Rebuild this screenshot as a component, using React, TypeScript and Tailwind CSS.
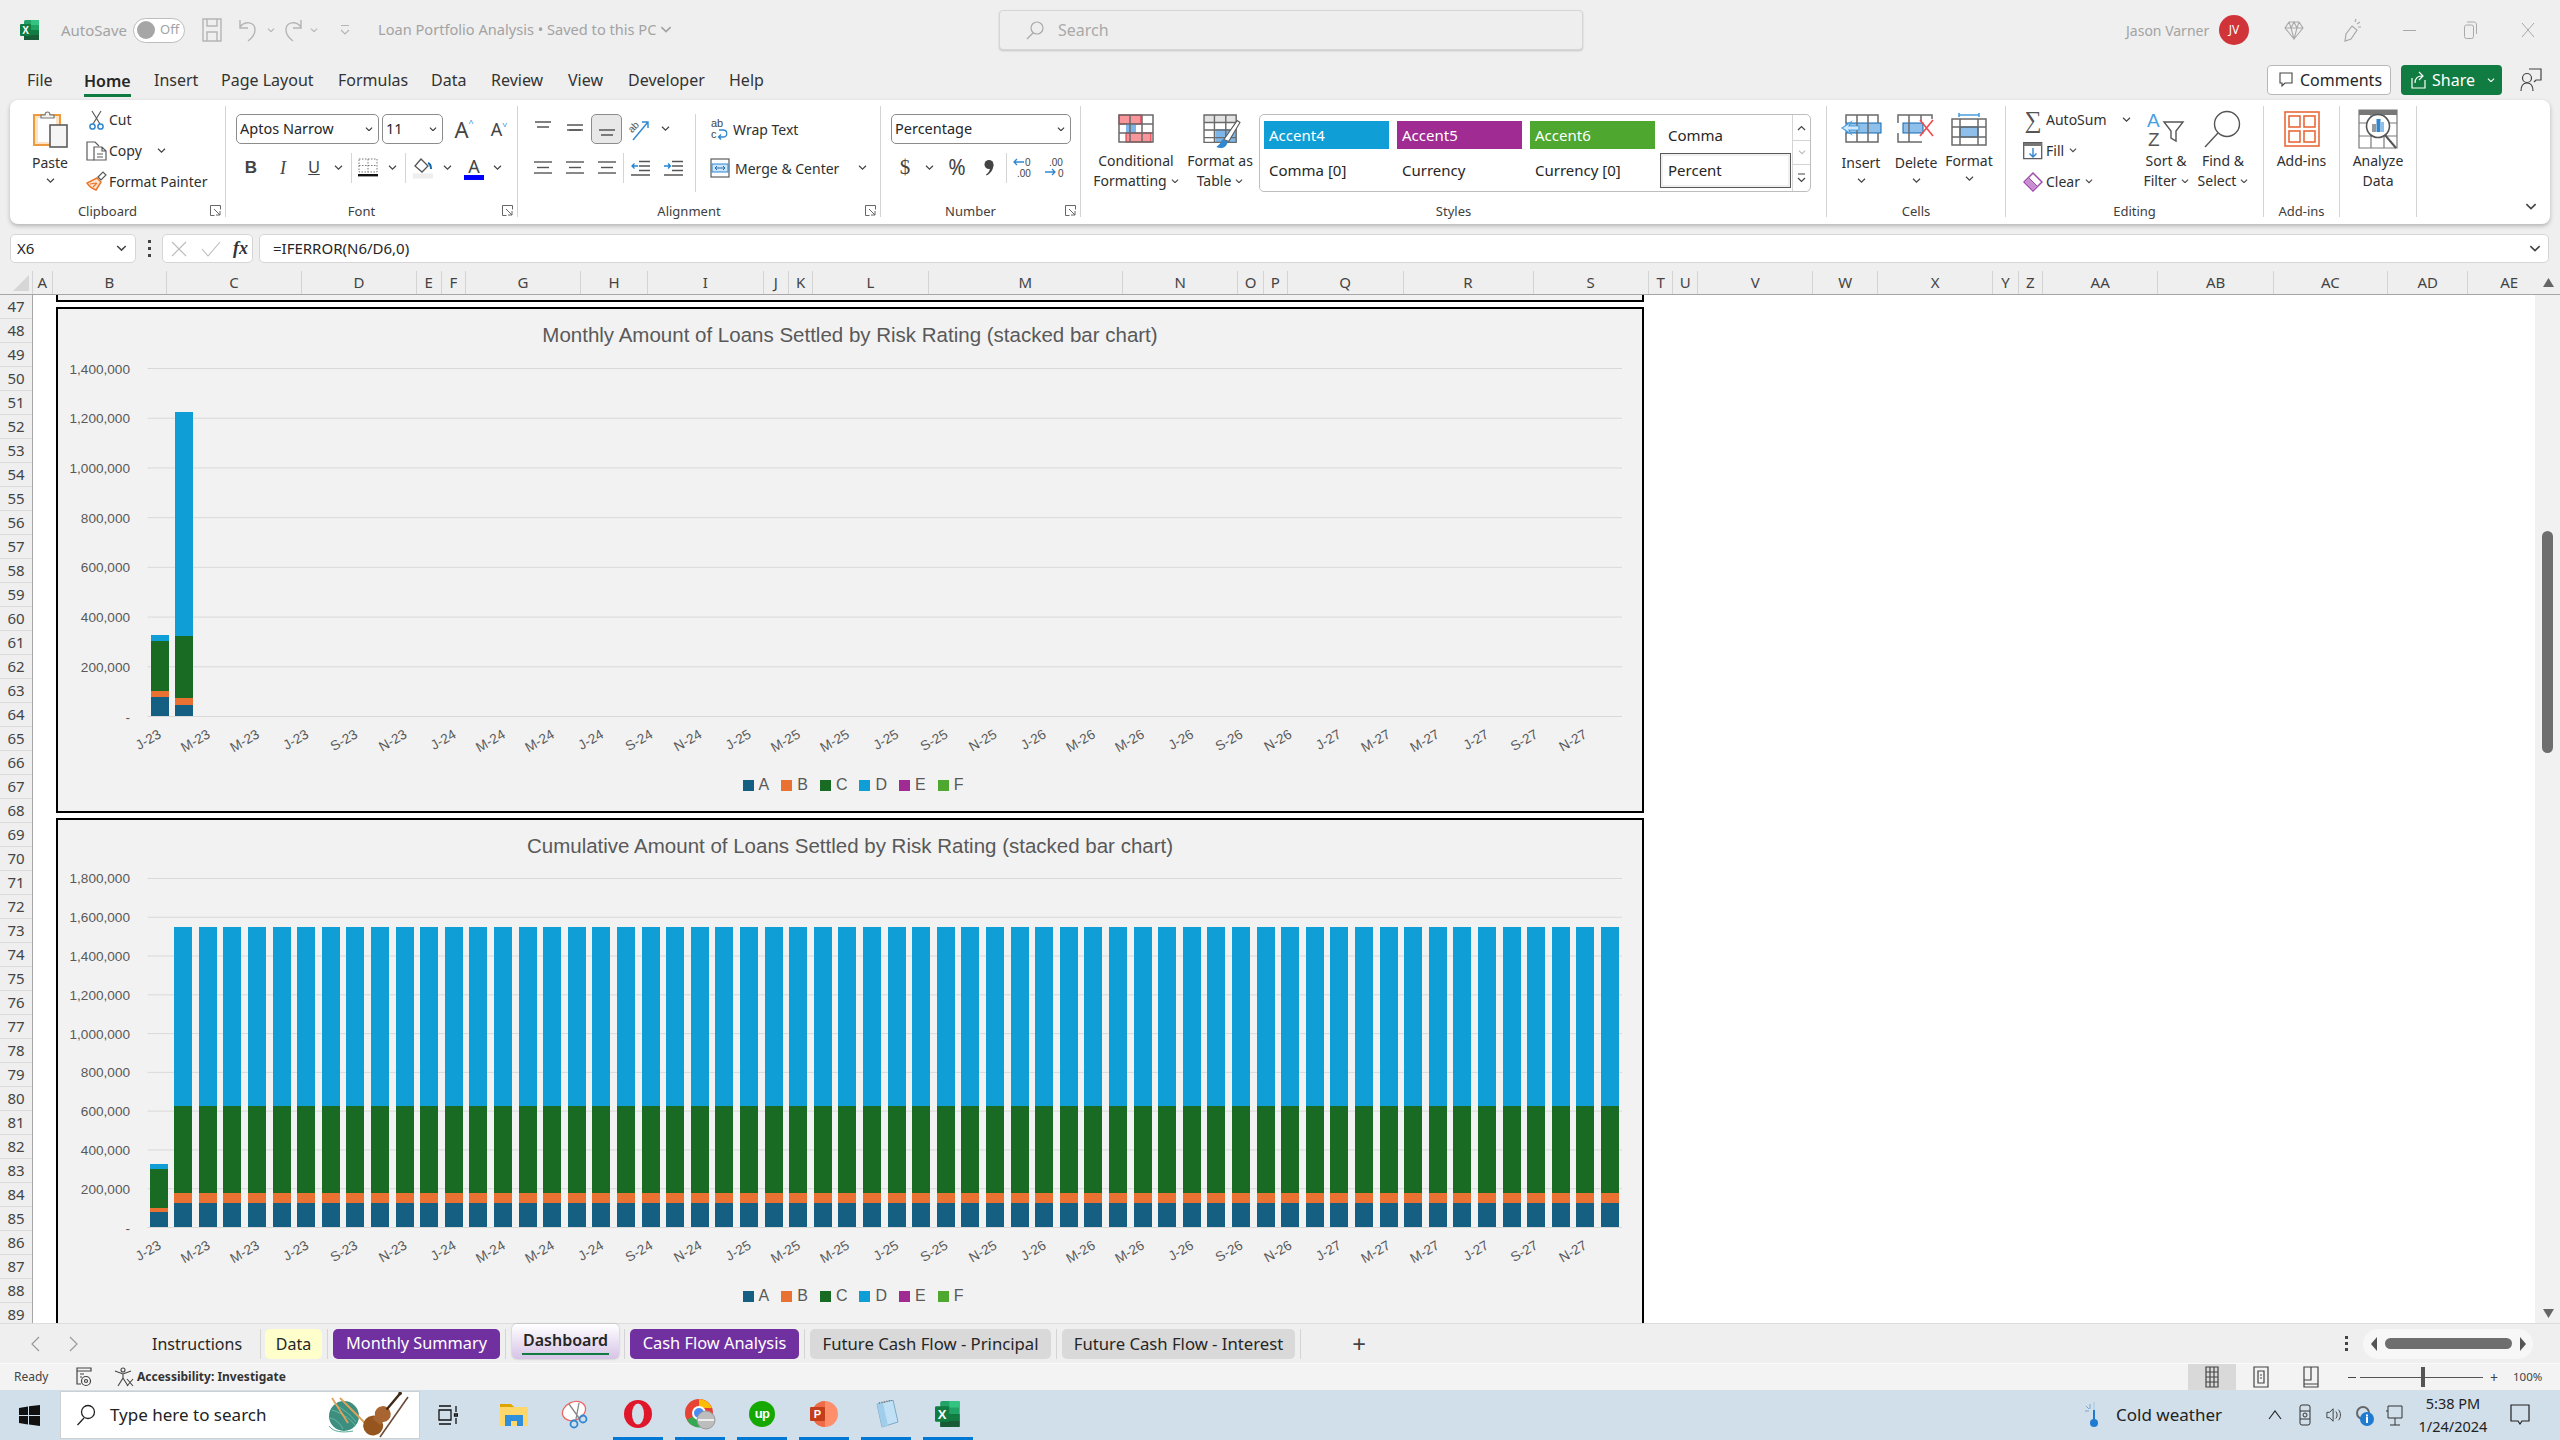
import React from "react";

const B = "#4a9fe0";
const BF = "#8fc0ec";
const BD = "#1069b0";

function Chev({ c = "#444", s = 9 }: { c?: string; s?: number }) {
  return (
    <svg width={s} height={s * 0.6} viewBox="0 0 9 5.4" fill="none" stroke={c} strokeWidth="1.2">
      <path d="M1 .8 4.5 4.2 8 .8" />
    </svg>
  );
}

function C({ className = "", children }: { className?: string; children?: React.ReactNode }) {
  return <div className={"flex items-center justify-center shrink-0 " + className}>{children}</div>;
}

function Launcher() {
  return (
    <svg width="11" height="11" viewBox="0 0 11 11" fill="none" stroke="#666" strokeWidth="1">
      <path d="M10.5 4.5V.5H.5v10h4M4 4l6 6M10 6v4H6" />
    </svg>
  );
}

function Group({ className = "", label, launcher, children }: { className?: string; label?: string; launcher?: boolean; children?: React.ReactNode }) {
  return (
    <div className={"flex flex-col h-[111px] mt-[6px] border-r border-[#d4d4d4] shrink-0 " + className}>
      <div className="h-[97px] flex">{children}</div>
      <div className="h-[14px] flex items-center">
        <div className="flex-1 text-center text-[13px] leading-[14px] text-[#404040] pt-[2px]">{label}</div>
        {launcher && <C className="w-[20px]"><Launcher /></C>}
      </div>
    </div>
  );
}

function Big({ className = "", icon, l1, l2, chev, low }: { className?: string; icon: React.ReactNode; l1: string; l2?: string; chev?: boolean; low?: boolean }) {
  return (
    <div className={"flex flex-col items-center shrink-0 " + className}>
      <div className="h-[45px] flex items-center justify-center">{icon}</div>
      <div className={"text-[14px] leading-[20px] whitespace-nowrap text-[#303030] " + (low ? "mt-[2px]" : "")}>{l1}</div>
      {l2 && (
        <div className="text-[14px] leading-[20px] whitespace-nowrap text-[#303030] flex items-center gap-[4px]">
          {l2}
          {chev && <Chev s={8} />}
        </div>
      )}
      {!l2 && chev && <div className="h-[16px] flex items-center"><Chev /></div>}
    </div>
  );
}

const ExcelLogo = ({ s = 20 }: { s?: number }) => (
  <svg width={s} height={s} viewBox="0 0 20 20">
    <rect x="4" y="0" width="15" height="20" rx="1.5" fill="#21a366" />
    <rect x="11" y="0" width="8" height="5" fill="#33c481" />
    <rect x="4" y="10" width="15" height="5" fill="#107c41" />
    <rect x="4" y="15" width="15" height="5" fill="#185c37" />
    <rect x="0" y="4" width="11" height="12" rx="1" fill="#107c41" />
    <text x="5.5" y="13.5" textAnchor="middle" fontSize="10" fontWeight="700" fill="#fff" fontFamily="Liberation Sans">X</text>
  </svg>
);

const SaveIc = () => (
  <svg width="20" height="24" viewBox="0 0 20 24" fill="none" stroke="#b5b5b5" strokeWidth="1.4">
    <path d="M1 1h18v22H1zM5 1v7h10V1M5 23v-9h10v9" />
  </svg>
);
const UndoIc = ({ flip }: { flip?: boolean }) => (
  <svg width="19" height="24" viewBox="0 0 19 24" fill="none" stroke="#b5b5b5" strokeWidth="1.4" className={flip ? "-scale-x-100" : ""}>
    <path d="M2 2v8h8M2 9c5-7 15-5 15 3 0 4-3 8-7 11" />
  </svg>
);

const PasteIc = () => (
  <svg width="35" height="38" viewBox="0 0 35 38">
    <rect x="1" y="5" width="26" height="30" fill="#fde3c3" stroke="#ec9a3b" strokeWidth="2" />
    <rect x="5" y="8" width="18" height="24" fill="#fff" />
    <path d="M8 8V5h4c0-4 5-4 5 0h4v3z" fill="#f2f2f2" stroke="#777" strokeWidth="1.2" />
    <rect x="17" y="15" width="17" height="22" fill="#f5f5f5" stroke="#5c5c5c" strokeWidth="1.6" />
  </svg>
);
const CutIc = () => (
  <svg width="15" height="20" viewBox="0 0 15 20" fill="none">
    <path d="M3 1l8 13M12 1L4 14" stroke="#5c5c5c" strokeWidth="1.2" />
    <circle cx="3.5" cy="16.5" r="2.6" stroke="#2f86d1" strokeWidth="1.5" />
    <circle cx="11.5" cy="16.5" r="2.6" stroke="#2f86d1" strokeWidth="1.5" />
  </svg>
);
const CopyIc = () => (
  <svg width="21" height="20" viewBox="0 0 21 20" fill="none" stroke="#5c5c5c" strokeWidth="1.2">
    <path d="M8 19H1V1h8l4 4" />
    <path d="M8 6h8l4 4v9H8zM16 6v4h4M11 13h6M11 16h6" fill="#fff" />
  </svg>
);
const PainterIc = () => (
  <svg width="21" height="21" viewBox="0 0 21 21" fill="none">
    <path d="M11 7l4 4-5 8c-3-1-7-4-9-7z" fill="#fbe4cf" stroke="#e8772e" strokeWidth="1.5" />
    <path d="M4 13l6-1M7 16l4-4" stroke="#e8772e" strokeWidth="1.2" />
    <path d="M12 6l5-5 3 3-5 5z" fill="#fff" stroke="#5c5c5c" strokeWidth="1.2" />
  </svg>
);
const BorderIc = () => (
  <svg width="20" height="20" viewBox="0 0 20 20" fill="none">
    <path d="M1 1h18v13H1zM10 1v13M1 7.5h18" stroke="#777" strokeWidth="1" strokeDasharray="1.5 1.5" />
    <rect x="0" y="16" width="20" height="2.4" fill="#111" />
  </svg>
);
const FillIc = () => (
  <svg width="20" height="21" viewBox="0 0 20 21" fill="none">
    <path d="M8 1l7 7-6 6-7-6z" stroke="#555" strokeWidth="1.3" fill="#fff" />
    <path d="M15 5c3 1 3 5 3 6" stroke={BD} strokeWidth="2" />
    <rect x="0" y="15.5" width="20" height="5" fill="#eeeeee" />
  </svg>
);
const Lines = ({ w }: { w: number[] }) => (
  <svg width="18" height="16" viewBox="0 0 18 16" fill="none" stroke="#555" strokeWidth="1.4">
    {w.map((v, i) => (
      <path key={i} d={`M${(18 - v) / 2} ${2 + i * 5.5}h${v}`} />
    ))}
  </svg>
);
const AlignV = ({ y }: { y: number }) => (
  <svg width="18" height="20" viewBox="0 0 18 20" fill="none" stroke="#555" strokeWidth="1.4">
    <path d={`M1 ${y}h16M3 ${y + 5}h12`} />
    {y === 6 ? <path d="M1 11h16" /> : null}
  </svg>
);
const IndentIc = ({ right }: { right?: boolean }) => (
  <svg width="19" height="16" viewBox="0 0 19 16" fill="none">
    <path d="M8 1.5h11M8 6h11M8 10.5h11M0 15h19" stroke="#555" strokeWidth="1.3" />
    <path d={right ? "M0 6h6M4 3.5 6.5 6 4 8.5" : "M7 6H1M3.5 3.5 1 6l2.5 2.5"} stroke="#1f85d6" strokeWidth="1.3" />
  </svg>
);
const OrientIc = () => (
  <svg width="24" height="26" viewBox="0 0 24 26" fill="none" className="overflow-visible">
    <text x="1" y="14" fontSize="10" fill="#555" transform="rotate(-45 7 11)" fontFamily="Liberation Sans">ab</text>
    <path d="M6 24 21 6M15 6h6v6" stroke="#2f86d1" strokeWidth="1.4" />
  </svg>
);
const WrapIc = () => (
  <svg width="20" height="28" viewBox="0 0 20 28" fill="none">
    <text x="1" y="12" fontSize="11" fill="#444" fontFamily="Liberation Sans">ab</text>
    <text x="1" y="23" fontSize="11" fill="#444" fontFamily="Liberation Sans">c</text>
    <path d="M9 22h4c5 0 5-7 0-7H9M11 19.5 8.5 22l2.5 2.5" stroke="#2f86d1" strokeWidth="1.3" />
  </svg>
);
const MergeIc = () => (
  <svg width="20" height="20" viewBox="0 0 20 20" fill="none">
    <rect x="1" y="1" width="18" height="18" fill="#fff" stroke="#5c5c5c" strokeWidth="1.2" />
    <rect x="2" y="6" width="16" height="8" fill="#cfe4f7" stroke="#2f86d1" />
    <path d="M5 10h10M7 8l-2 2 2 2M13 8l2 2-2 2" stroke="#1f6fb8" strokeWidth="1" />
  </svg>
);
const Dec = ({ inc }: { inc?: boolean }) => (
  <svg width="24" height="26" viewBox="0 0 24 26" fill="none">
    <text x={inc ? 5 : 13} y="11" fontSize="10" fill="#444" fontFamily="Liberation Sans">{inc ? ".00" : "0"}</text>
    <text x={inc ? 14 : 5} y="22" fontSize="10" fill="#444" fontFamily="Liberation Sans">{inc ? "0" : ".00"}</text>
    <path d={inc ? "M1 17h10M8 14l3 3-3 3" : "M12 7H2M5 4 2 7l3 3"} stroke="#2f86d1" strokeWidth="1.3" />
  </svg>
);
const CommaIc = () => (
  <svg width="10" height="16" viewBox="0 0 10 16" fill="#444">
    <circle cx="5" cy="4.5" r="4.5" />
    <path d="M9.5 4.5c0 5-3 9-7 11l-.5-1c3-2 4-4.5 4-7z" />
  </svg>
);
const GridBase = ({ d }: { d: string }) => <path d={d} fill="none" stroke="#6a6a6a" strokeWidth="1.5" />;
const CondIc = () => (
  <svg width="36" height="29" viewBox="0 0 36 29">
    <rect x="1" y="1" width="34" height="27" fill="#fff" />
    <rect x="1" y="1" width="22" height="9" fill="#f8969c" stroke="#d23" strokeWidth="1" />
    <rect x="8" y="10" width="10" height="9" fill="#7eb6ea" />
    <rect x="8" y="19" width="25" height="9" fill="#f8969c" stroke="#d23" strokeWidth="1" />
    <GridBase d="M1 1h34v27H1zM12 1v27M24 1v27M1 10h34M1 19h34" />
  </svg>
);
const TableFmtIc = () => (
  <svg width="38" height="35" viewBox="0 0 40 37">
    <rect x="1" y="1" width="34" height="8" fill="#e3e3e3" />
    <rect x="13" y="16" width="22" height="14" fill="#7eb6ea" />
    <GridBase d="M1 1h34v29H1zM12 1v29M24 1v29M1 9h34M1 17h34M1 25h34" />
    <path d="M22 27 36 7l3 2-12 20z" fill="#fff" stroke="#5c5c5c" strokeWidth="1.2" />
    <path d="M20 27c-1 4-3 5-6 8 5 2 11 1 12-6z" fill="#2f86d1" />
  </svg>
);
const InsertIc = () => (
  <svg width="41" height="29" viewBox="0 0 41 29">
    <rect x="5" y="1" width="34" height="27" fill="#fff" />
    <rect x="5" y="9" width="35" height="10" fill={BF} stroke={BD} />
    <GridBase d="M5 9V1h32v8M5 19v9h32v-9M16 1v27M27 1v27" />
    <path d="M18 12H8l2-4-9 6 9 6-2-4h10z" fill="#d5e8f9" stroke={B} strokeWidth="1.2" />
  </svg>
);
const DeleteIc = () => (
  <svg width="38" height="29" viewBox="0 0 38 29">
    <rect x="1" y="1" width="34" height="27" fill="#fff" />
    <rect x="6" y="9" width="20" height="10" fill={BF} stroke={BD} />
    <GridBase d="M1 9V1h34v4M1 19v9h24M12 1v27M24 1v6" />
    <path d="M23 6 36 22M36 6 23 22" stroke="#f0484e" strokeWidth="1.6" />
  </svg>
);
const FormatIc = () => (
  <svg width="36" height="34" viewBox="0 0 36 34">
    <path d="M8 1v4M28 1v4M8 3h20" stroke={B} strokeWidth="1.6" />
    <rect x="1" y="7" width="34" height="26" fill="#fff" />
    <rect x="9" y="15" width="18" height="10" fill={BF} stroke={BD} />
    <GridBase d="M1 7h34v26H1zM9 7v26M27 7v26M1 15h34M1 25h34" />
  </svg>
);
const FillDownIc = () => (
  <svg width="20" height="18" viewBox="0 0 20 18" fill="none">
    <path d="M.7 .7h18v16H.7z" stroke="#5c5c5c" strokeWidth="1.3" fill="#fff" />
    <rect x="1" y="1" width="18" height="3" fill="#777" />
    <path d="M10 6v9M6.5 11.5 10 15l3.5-3.5" stroke="#2f86d1" strokeWidth="1.4" />
  </svg>
);
const ClearIc = () => (
  <svg width="20" height="20" viewBox="0 0 20 20">
    <path d="M10 1l9 9-9 9-9-9z" fill="#fff" stroke="#a349b0" strokeWidth="1.5" />
    <path d="M5.5 5.5l9 9-4.5 4.5-9-9z" fill="#c78ed0" stroke="#a349b0" strokeWidth="1" />
  </svg>
);
const SortIc = () => (
  <svg width="38" height="44" viewBox="0 0 38 44" fill="none">
    <text x="0" y="20" fontSize="19" fill={B} fontFamily="Liberation Sans">A</text>
    <text x="1" y="39" fontSize="19" fill="#555" fontFamily="Liberation Sans">Z</text>
    <path d="M17 15h19l-7 9v10l-5-3v-7z" stroke="#555" strokeWidth="1.4" />
  </svg>
);
const FindIc = () => (
  <svg width="38" height="38" viewBox="0 0 38 38" fill="none" stroke="#555" strokeWidth="1.4">
    <circle cx="23" cy="14" r="12.5" />
    <path d="M14 23 1 37" />
  </svg>
);
const AddinsIc = () => (
  <svg width="36" height="36" viewBox="0 0 36 36" fill="none" stroke="#e8693a" strokeWidth="1.6">
    <rect x="1" y="1" width="34" height="34" />
    <rect x="5" y="5" width="11" height="11" />
    <rect x="20" y="5" width="11" height="11" />
    <rect x="5" y="20" width="11" height="11" />
    <rect x="20" y="20" width="11" height="11" />
  </svg>
);
const AnalyzeIc = () => (
  <svg width="40" height="40" viewBox="0 0 40 40" fill="none">
    <rect x="1" y="1" width="38" height="5" fill="#777" />
    <path d="M1 1h38v38H1zM1 14h38M1 27h38M13 1v38M26 1v38" stroke="#7a7a7a" strokeWidth="1.2" />
    <circle cx="20" cy="17" r="11.5" fill="#fff" stroke="#555" strokeWidth="1.6" />
    <rect x="14" y="15" width="4" height="8" fill="#999" />
    <rect x="18.5" y="10" width="4" height="13" fill="#2f86d1" />
    <rect x="23" y="13" width="3" height="10" fill={BF} />
    <path d="M27 26l11 13" stroke="#555" strokeWidth="2" />
  </svg>
);

function TitleBar() {
  return (
    <div className="h-[60px] flex items-center shrink-0 text-[15px] text-[#a3a3a3]">
      <div className="ml-[20px] w-[20px]"><ExcelLogo /></div>
      <div className="ml-[21px] w-[63px]">AutoSave</div>
      <div className="ml-[9px] w-[52px] h-[25px] rounded-full border border-[#bdbdbd] bg-white flex items-center pl-[3px] gap-[5px] text-[13px]">
        <div className="w-[18px] h-[18px] rounded-full bg-[#a6a6a6]" />
        <span>Off</span>
      </div>
      <C className="ml-[17px] w-[20px]"><SaveIc /></C>
      <C className="ml-[16px] w-[19px]"><UndoIc /></C>
      <C className="ml-[9px] w-[10px]"><Chev c="#b5b5b5" s={8} /></C>
      <C className="ml-[7px] w-[20px]"><UndoIc flip /></C>
      <C className="ml-[6px] w-[10px]"><Chev c="#b5b5b5" s={8} /></C>
      <C className="ml-[21px] w-[10px]">
        <svg width="10" height="13" viewBox="0 0 10 13" fill="none" stroke="#b5b5b5" strokeWidth="1.1"><path d="M1 1.5h8M1 6l4 4 4-4" /></svg>
      </C>
      <div className="ml-[28px] w-[282px] whitespace-nowrap text-[14.6px]">Loan Portfolio Analysis  •  Saved to this PC</div>
      <C className="w-[12px]"><Chev c="#a3a3a3" s={12} /></C>
      <div className="ml-[327px] w-[584px] h-[40px] rounded-[4px] border border-[#d6d6d6] bg-[#eeeeee] shadow-[0_1px_2px_rgba(0,0,0,0.18)] flex items-center pl-[25px] gap-[13px] text-[#a9a9a9]">
        <svg width="20" height="20" viewBox="0 0 20 20" fill="none" stroke="#a9a9a9" strokeWidth="1.2"><circle cx="12" cy="8" r="6" /><path d="M8 13 2 19" /></svg>
        <span className="text-[16px]">Search</span>
      </div>
      <div className="ml-[543px] w-[84px] whitespace-nowrap text-[14px] text-[#a3a3a3]">Jason Varner</div>
      <C className="ml-[9px] w-[30px] h-[30px] rounded-full bg-[#d13438] text-white text-[12px]">JV</C>
      <C className="ml-[34px] w-[22px]">
        <svg width="20" height="20" viewBox="0 0 20 20" fill="none" stroke="#a9a9a9" strokeWidth="1.1"><path d="M5 2h10l4 6-9 11L1 8zM1 8h18M7 8l3 11 3-11M5 2l2 6 3-6 3 6 2-6" /></svg>
      </C>
      <C className="ml-[36px] w-[22px]">
        <svg width="20" height="24" viewBox="0 0 20 24" fill="none" stroke="#a9a9a9" strokeWidth="1.2"><path d="M10 8l5 4-6 9-6 2 1-7zM14 1l-1 3M18 4l-3 2M19 9h-3" /></svg>
      </C>
      <C className="ml-[39px] w-[14px]"><div className="w-[13px] h-[1px] bg-[#a9a9a9]" /></C>
      <C className="ml-[47px] w-[14px]">
        <svg width="13" height="18" viewBox="0 0 13 18" fill="none" stroke="#a9a9a9" strokeWidth="1"><rect x=".5" y="4" width="9" height="13.5" rx="2" /><path d="M3 1h6.5c2 0 3 1 3 3v9" /></svg>
      </C>
      <C className="ml-[44px] w-[14px]">
        <svg width="14" height="18" viewBox="0 0 14 18" fill="none" stroke="#a9a9a9" strokeWidth="1"><path d="M1 2l12 14M13 2 1 16" /></svg>
      </C>
    </div>
  );
}

const TABS: [string, number][] = [["File", 27], ["Home", 84], ["Insert", 154], ["Page Layout", 221], ["Formulas", 338], ["Data", 431], ["Review", 491], ["View", 568], ["Developer", 628], ["Help", 729], ["", 800]];

function TabRow() {
  return (
    <div className="h-[40px] flex items-center shrink-0 pl-[27px] text-[16px] text-[#333] relative">
      {TABS.slice(0, -1).map(([t, x], i) => (
        <div key={t} className="h-[40px] flex items-center" style={{ width: TABS[i + 1][1] - x }}>
          <span className={t === "Home" ? "font-semibold text-[#262626] border-b-[3px] border-[#107c41] h-[31px] mt-[2px] leading-[30px]" : ""}>{t}</span>
        </div>
      ))}
      <div className="ml-[1467px] w-[124px] h-[30px] border border-[#b8b8b8] bg-white rounded-[4px] flex items-center pl-[11px] gap-[7px] text-[#262626]">
        <svg width="14" height="16" viewBox="0 0 14 16" fill="none" stroke="#444" strokeWidth="1.1"><path d="M1 1h12v10H6l-3 3v-3H1z" /></svg>
        Comments
      </div>
      <div className="ml-[10px] w-[101px] h-[30px] bg-[#107c41] rounded-[4px] flex items-center pl-[10px] gap-[6px] text-white">
        <svg width="15" height="18" viewBox="0 0 15 18" fill="none" stroke="#fff" strokeWidth="1.2"><path d="M1 7v10h13V9M4 12c0-5 3-7 7-7M8 1l4 4-4 4" /></svg>
        Share
        <span className="ml-[6px]"><Chev c="#fff" s={8} /></span>
      </div>
      <C className="ml-[17px] w-[24px]">
        <svg width="22" height="26" viewBox="0 0 22 26" fill="none" stroke="#444" strokeWidth="1.2"><path d="M9 2h12v11h-5l-2 2" /><circle cx="7" cy="11" r="4.5" /><path d="M1 24c0-6 3-8 6-8s6 2 6 8" /></svg>
      </C>
    </div>
  );
}

function Select({ className = "", text }: { className?: string; text: string }) {
  return (
    <div className={"h-[30px] border border-[#8c8c8c] rounded-[5px] flex items-center justify-between pl-[3px] pr-[5px] text-[14.5px] text-[#262626] shrink-0 " + className}>
      <span>{text}</span>
      <Chev c="#333" s={8} />
    </div>
  );
}

function SmallRow({ icon, text, chev, textClass = "" }: { icon: React.ReactNode; text: string; chev?: React.ReactNode; textClass?: string }) {
  return (
    <div className="h-[31px] flex items-center text-[14px] text-[#303030]">
      <C className="w-[25px]">{icon}</C>
      <span className={"whitespace-nowrap " + textClass}>{text}</span>
      {chev}
    </div>
  );
}

function Ribbon() {
  return (
    <div className="ml-[10px] w-[2540px] h-[124px] rounded-[8px] bg-white shadow-[0_2px_4px_rgba(0,0,0,0.25)] flex shrink-0">
      <Group className="w-[216px]" label="Clipboard" launcher>
        <Big className="w-[74px] pl-[6px]" icon={<PasteIc />} l1="Paste" chev low />
        <div className="-mt-[2px]">
          <SmallRow icon={<CutIc />} text="Cut" />
          <SmallRow icon={<CopyIc />} text="Copy" chev={<span className="ml-[15px]"><Chev /></span>} />
          <SmallRow icon={<PainterIc />} text="Format Painter" />
        </div>
      </Group>

      <Group className="w-[292px]" label="Font" launcher>
        <div className="pl-[10px] pt-[8px]">
          <div className="flex items-center">
            <Select className="w-[143px]" text="Aptos Narrow" />
            <Select className="w-[61px] ml-[3px]" text="11" />
            <C className="w-[38px] ml-[2px] text-[22px] text-[#444] h-[30px] relative">
              A<span className="text-[#2f86d1] text-[9px] mb-[12px]">^</span>
            </C>
            <C className="w-[32px] text-[18px] text-[#444] h-[30px]">
              A<span className="text-[#2f86d1] text-[9px] mb-[10px] rotate-180">^</span>
            </C>
          </div>
          <div className="flex items-center h-[30px] mt-[9px]">
            <C className="w-[30px] font-bold font-['Liberation_Sans'] text-[17px] text-[#444]">B</C>
            <C className="w-[34px] italic font-['Liberation_Serif'] text-[18px] text-[#444]">I</C>
            <C className="w-[28px] underline font-['Liberation_Sans'] text-[16px] text-[#444]">U</C>
            <C className="w-[20px]"><Chev /></C>
            <C className="w-[6px]"><div className="w-px h-[30px] bg-[#d4d4d4]" /></C>
            <C className="w-[28px]"><BorderIc /></C>
            <C className="w-[20px]"><Chev /></C>
            <C className="w-[6px]"><div className="w-px h-[30px] bg-[#d4d4d4]" /></C>
            <C className="w-[30px]"><FillIc /></C>
            <C className="w-[18px]"><Chev /></C>
            <div className="w-[36px] flex flex-col items-center text-[18px] leading-[18px] text-[#444]">
              A
              <div className="w-[20px] h-[5px] bg-[#0000ff]" />
            </div>
            <C className="w-[10px]"><Chev /></C>
          </div>
        </div>
      </Group>

      <Group className="w-[363px]" label="Alignment" launcher>
        <div className="w-[178px] h-[78px] mt-[8px] pl-[9px] border-r border-[#d4d4d4]">
          <div className="flex items-center h-[30px]">
            <C className="w-[32px]"><AlignV y={3} /></C>
            <C className="w-[32px]"><AlignV y={6} /></C>
            <C className="w-[31px] h-[30px] bg-[#e8e8e8] border border-[#8c8c8c] rounded-[5px]"><AlignV y={11} /></C>
            <C className="w-[33px]"><OrientIc /></C>
            <C className="w-[20px]"><Chev /></C>
          </div>
          <div className="flex items-center h-[30px] mt-[9px]">
            <C className="w-[32px]"><Lines w={[18, 12, 18]} /></C>
            <C className="w-[32px]"><Lines w={[18, 12, 18]} /></C>
            <C className="w-[33px] border-r border-[#d4d4d4] h-[30px]"><Lines w={[18, 12, 18]} /></C>
            <C className="w-[33px]"><IndentIc /></C>
            <C className="w-[32px]"><IndentIc right /></C>
          </div>
        </div>
        <div className="pt-[8px] pl-[14px]">
          <div className="h-[30px] flex items-center gap-[3px] text-[14px] text-[#303030]">
            <WrapIc />
            <span>Wrap Text</span>
          </div>
          <div className="h-[30px] mt-[9px] flex items-center gap-[5px] text-[14px] text-[#303030]">
            <MergeIc />
            <span className="whitespace-nowrap">Merge &amp; Center</span>
            <span className="ml-[14px]"><Chev /></span>
          </div>
        </div>
      </Group>

      <Group className="w-[200px]" label="Number" launcher>
        <div className="pl-[10px] pt-[8px]">
          <Select className="w-[180px]" text="Percentage" />
          <div className="flex items-center h-[30px] mt-[9px] text-[#444]">
            <C className="w-[28px] text-[21px] font-['Liberation_Serif']">$</C>
            <C className="w-[20px]"><Chev /></C>
            <C className="w-[36px] text-[21px]">%</C>
            <C className="w-[28px]"><CommaIc /></C>
            <C className="w-[6px]"><div className="w-px h-[30px] bg-[#d4d4d4]" /></C>
            <C className="w-[30px]"><Dec /></C>
            <C className="w-[34px]"><Dec inc /></C>
          </div>
        </div>
      </Group>

      <Group className="w-[746px]" label="Styles">
        <Big className="w-[80px] ml-[15px]" icon={<CondIc />} l1="Conditional" l2="Formatting" chev />
        <Big className="w-[80px] ml-[4px]" icon={<div className="mt-[5px] pl-[3px]"><TableFmtIc /></div>} l1="Format as" l2="Table" chev />
        <div className="w-[552px] h-[78px] mt-[8px] -ml-[1px] border border-[#bdbdbd] rounded-[5px] flex text-[15px] text-[#262626]">
          <div className="w-[533px] pl-[4px] pt-[6px]">
            <div className="flex gap-[8px] h-[28px]">
              <div className="w-[125px] bg-[#0f9ed5] text-white flex items-center pl-[5px]">Accent4</div>
              <div className="w-[125px] bg-[#a02b93] text-white flex items-center pl-[5px]">Accent5</div>
              <div className="w-[125px] bg-[#4ea72e] text-white flex items-center pl-[5px]">Accent6</div>
              <div className="w-[125px] flex items-center pl-[5px]">Comma</div>
            </div>
            <div className="flex gap-[8px] h-[35px] mt-[4px]">
              <div className="w-[125px] flex items-center pl-[5px]">Comma [0]</div>
              <div className="w-[125px] flex items-center pl-[5px]">Currency</div>
              <div className="w-[125px] flex items-center pl-[5px]">Currency [0]</div>
              <div className="w-[131px] -ml-[3px] border-[1.5px] border-[#595959] bg-white shadow-[inset_0_0_0_2px_#efefef] flex items-center pl-[7px]">Percent</div>
            </div>
          </div>
          <div className="w-[18px] flex flex-col">
            <C className="h-[26px] border-l border-b border-[#d4d4d4]"><svg width="9" height="6" viewBox="0 0 9 6" fill="none" stroke="#444" strokeWidth="1.2"><path d="M1 5 4.5 1.5 8 5" /></svg></C>
            <C className="h-[24px] border-l border-b border-[#d4d4d4]"><Chev c="#bbb" s={8} /></C>
            <C className="flex-1 border-l border-[#d4d4d4]"><svg width="9" height="11" viewBox="0 0 9 11" fill="none" stroke="#444" strokeWidth="1.2"><path d="M1 1h7M1 5 4.5 8.5 8 5" /></svg></C>
          </div>
        </div>
      </Group>

      <Group className="w-[179px]" label="Cells">
        <Big className="w-[56px] ml-[6px]" icon={<InsertIc />} l1="Insert" chev low />
        <Big className="w-[54px]" icon={<DeleteIc />} l1="Delete" chev low />
        <Big className="w-[52px]" icon={<FormatIc />} l1="Format" chev />
      </Group>

      <Group className="w-[258px]" label="Editing">
        <div className="w-[132px] pl-[14px] -mt-[2px]">
          <div className="h-[31px] flex items-center text-[14px] text-[#303030]">
            <C className="w-[26px] text-[24px] text-[#555] font-['Liberation_Serif']">∑</C>
            <span className="w-[72px]">AutoSum</span>
            <C className="w-[16px]"><Chev /></C>
          </div>
          <div className="h-[31px] flex items-center text-[14px] text-[#303030]">
            <C className="w-[26px]"><FillDownIc /></C>
            <span>Fill</span>
            <span className="ml-[5px]"><Chev s={8} /></span>
          </div>
          <div className="h-[31px] flex items-center text-[14px] text-[#303030]">
            <C className="w-[26px]"><ClearIc /></C>
            <span>Clear</span>
            <span className="ml-[5px]"><Chev s={8} /></span>
          </div>
        </div>
        <Big className="w-[56px]" icon={<SortIc />} l1="Sort &" l2="Filter" chev />
        <Big className="w-[56px] ml-[1px]" icon={<FindIc />} l1="Find &" l2="Select" chev />
      </Group>

      <Group className="w-[76px]" label="Add-ins">
        <Big className="w-[75px]" icon={<AddinsIc />} l1="Add-ins" />
      </Group>

      <Group className="w-[77px]">
        <Big className="w-[76px]" icon={<AnalyzeIc />} l1="Analyze" l2="Data" />
      </Group>

      <div className="flex-1 flex items-end justify-end pr-[13px] pb-[14px]"><Chev c="#444" s={12} /></div>
    </div>
  );
}

function FormulaBar() {
  return (
    <div className="h-[29px] mt-[10px] ml-[10px] flex shrink-0 text-[15px] text-[#262626]">
      <div className="w-[126px] bg-white border border-[#d6d6d6] rounded-[5px] flex items-center justify-between pl-[6px] pr-[8px]">
        X6
        <Chev c="#444" s={11} />
      </div>
      <C className="w-[26px]">
        <svg width="3" height="17" viewBox="0 0 3 17" fill="#444"><rect y="0" width="3" height="3" /><rect y="7" width="3" height="3" /><rect y="14" width="3" height="3" /></svg>
      </C>
      <div className="w-[91px] bg-white border border-[#d6d6d6] rounded-[5px] flex items-center pl-[8px] gap-[14px]">
        <svg width="16" height="16" viewBox="0 0 16 16" fill="none" stroke="#bbb" strokeWidth="1.1"><path d="M1 1l14 14M15 1 1 15" /></svg>
        <svg width="20" height="16" viewBox="0 0 20 16" fill="none" stroke="#bbb" strokeWidth="1.1"><path d="M1 8l6 7L19 1" /></svg>
        <span className="italic font-bold font-['Liberation_Serif'] text-[18px] text-[#333] -ml-[2px]">fx</span>
      </div>
      <div className="ml-[6px] w-[2290px] bg-white border border-[#d6d6d6] rounded-[5px] flex items-center justify-between pl-[13px] pr-[7px]">
        =IFERROR(N6/D6,0)
        <Chev c="#444" s={12} />
      </div>
    </div>
  );
}

const EDGES = [33, 52.7, 167, 302, 417, 441.6, 466, 581, 648, 763.6, 789, 813.5, 928.6, 1123, 1238.5, 1263.7, 1288, 1403.6, 1533.6, 1648.8, 1673.5, 1698, 1813.5, 1878, 1993.5, 2018.7, 2043, 2158.6, 2273.8, 2388.4, 2468.5, 2535];
const COLS = "A B C D E F G H I J K L M N O P Q R S T U V W X Y Z AA AB AC AD AE".split(" ");

function ColHeader() {
  return (
    <div className="h-[24px] mt-[8px] flex shrink-0 border-b border-[#a6a6a6] text-[15px] text-[#444]">
      <div className="w-[33px] flex items-end justify-end pr-[3px] pb-[3px] border-r border-[#d4d4d4]">
        <svg width="16" height="16" viewBox="0 0 16 16" fill="#d6d6d6"><path d="M16 0v16H0z" /></svg>
      </div>
      {COLS.map((c, i) => (
        <div key={c} className={"flex items-center justify-center " + (c === "AE" ? "pl-[15px]" : "border-r border-[#d4d4d4]")} style={{ width: EDGES[i + 1] - EDGES[i] }}>{c}</div>
      ))}
      <C className="w-[25px] items-center pl-[2px]">
        <svg width="11" height="9" viewBox="0 0 11 9" fill="#666"><path d="M5.5 0 11 9H0z" /></svg>
      </C>
    </div>
  );
}

const ROWS = Array.from({ length: 43 }, (_, i) => 47 + i);

function RowHeader() {
  return (
    <div className="w-[33px] shrink-0 overflow-hidden border-r border-[#a6a6a6] text-[15px] text-[#444]">
      {ROWS.map((r) => (
        <div key={r} className="h-[24px] flex items-center justify-center border-b border-[#dcdcdc]">{r}</div>
      ))}
    </div>
  );
}

const SERIES = ["#156082", "#e97132", "#196b24", "#0f9ed5"];
const LEGEND: [string, string][] = [["A", "#156082"], ["B", "#e97132"], ["C", "#196b24"], ["D", "#0f9ed5"], ["E", "#a02b93"], ["F", "#4ea72e"]];
const MONTHS = ["J", "M", "M", "J", "S", "N"];
const CATS = Array.from({ length: 30 }, (_, i) => `${MONTHS[i % 6]}-${23 + Math.floor(i / 6)}`);
const fmt = (v: number) => (v === 0 ? "-" : v.toLocaleString("en-US"));

function Chart({ title, className = "", top, tickCount, step, pxStep, barYs, dx }: { title: string; className?: string; top: number; tickCount: number; step: number; pxStep: number; barYs: (i: number) => number[] | null; dx: number }) {
  const ticks = Array.from({ length: tickCount }, (_, i) => i);
  const bars = Array.from({ length: 60 }, (_, i) => i);
  return (
    <div className={"w-[1588px] border-2 border-black bg-[#f2f2f2] font-['Liberation_Sans'] " + className}>
      <div className="h-[54px] pb-[2px] flex items-center justify-center text-[20.5px] text-[#595959]">{title}</div>
      <svg width="1584" height="400" viewBox="58 0 1584 400" className="block overflow-visible">
        {ticks.map((t) => (
          <g key={t}>
            <line x1="147.5" x2="1622" y1={353.5 - t * pxStep} y2={353.5 - t * pxStep} stroke="#d9d9d9" strokeWidth="1" />
            <text x="130" y={358.5 - t * pxStep} textAnchor="end" fontSize="13.6" fill="#595959" fontFamily="Liberation Sans">{fmt(t * step)}</text>
          </g>
        ))}
        {bars.map((i) => {
          const ys = barYs(i);
          if (!ys) return null;
          const x = Math.floor(150 + 24.6 * i) + dx;
          return SERIES.map((c, s) => (
            <rect key={s} x={x} width="18" y={ys[s + 1] - top} height={ys[s] - ys[s + 1]} fill={c} />
          ));
        })}
        {CATS.map((c, i) => {
          const x = 158 + i * 49.17 + 4;
          return (
            <text key={i} x={x} y="374" textAnchor="end" fontSize="13.6" fill="#595959" fontFamily="Liberation Sans" transform={`rotate(-30 ${x} 374)`}>{c}</text>
          );
        })}
      </svg>
      <div className="h-[44px] flex items-center justify-center gap-[12px] text-[16px] text-[#595959] pl-[6px]">
        {LEGEND.map(([l, c]) => (
          <div key={l} className="flex items-center gap-[5px]">
            <div className="w-[11px] h-[11px]" style={{ background: c }} />
            {l}
          </div>
        ))}
      </div>
    </div>
  );
}

function Sheet() {
  return (
    <div className="flex h-[1028px] shrink-0">
      <RowHeader />
      <div className="w-[2502px] bg-white overflow-hidden pl-[23px]">
        <div className="w-[1588px] h-[7px] border-2 border-t-0 border-black bg-[#f2f2f2]" />
        <Chart
          className="mt-[5px] h-[506px]"
          title="Monthly Amount of Loans Settled by Risk Rating (stacked bar chart)"
          top={363}
          tickCount={8}
          step={200000}
          pxStep={49.71}
          dx={1}
          barYs={(i) => (i === 0 ? [716, 697, 691, 641, 635] : i === 1 ? [716, 705, 698, 636, 412] : null)}
        />
        <Chart
          className="mt-[5px] h-[520px]"
          title="Cumulative Amount of Loans Settled by Risk Rating (stacked bar chart)"
          top={874}
          tickCount={10}
          step={200000}
          pxStep={38.78}
          dx={0}
          barYs={(i) => (i === 0 ? [1227, 1212, 1208, 1169, 1164] : [1227, 1203, 1193, 1106, 927])}
        />
      </div>
      <div className="w-[25px] bg-[#f1f1f1] flex flex-col pl-[7px]">
        <div className="mt-[236px] w-[11px] h-[222px] rounded-full bg-[#6e6e6e]" />
        <div className="mt-auto mb-[5px] pl-[1px]">
          <svg width="11" height="9" viewBox="0 0 11 9" fill="#666"><path d="M5.5 9 11 0H0z" /></svg>
        </div>
      </div>
    </div>
  );
}

function Sep({ className = "" }: { className?: string }) {
  return <div className={"w-px h-[30px] bg-[#d4d4d4] shrink-0 " + className} />;
}

function SheetTabs() {
  const purple = "h-[30px] bg-[#7030a0] text-white rounded-[5px] flex items-center justify-center shrink-0";
  const gray = "h-[30px] bg-[#d9d9d9] rounded-[5px] flex items-center justify-center shrink-0 text-[16.7px]";
  return (
    <div className="h-[40px] flex items-center shrink-0 bg-[#efefef] border-t border-[#dcdcdc] text-[16px] text-[#262626]">
      <div className="w-[152px] flex items-center pl-[31px] gap-[29px] shrink-0">
        <svg width="9" height="16" viewBox="0 0 9 16" fill="none" stroke="#999" strokeWidth="1.2"><path d="M8 1 1 8l7 7" /></svg>
        <svg width="9" height="16" viewBox="0 0 9 16" fill="none" stroke="#999" strokeWidth="1.2"><path d="m1 1 7 7-7 7" /></svg>
      </div>
      <div className="w-[108px] shrink-0">Instructions</div>
      <Sep />
      <div className="ml-[4px] w-[57px] h-[30px] bg-[#ffffcc] rounded-[5px] flex items-center justify-center shrink-0">Data</div>
      <Sep className="ml-[5px]" />
      <div className={purple + " ml-[5px] w-[167px] text-[16.3px]"}>Monthly Summary</div>
      <Sep className="ml-[5px]" />
      <div className="ml-[6px] w-[107px] h-[35px] -mt-[5px] rounded-[5px] bg-gradient-to-b from-white to-[#d6c3e6] shadow-[0_0_2px_rgba(0,0,0,0.3)] flex flex-col items-center justify-center font-semibold shrink-0">
        <span className="border-b-[2px] border-[#107c41] px-[1px] leading-[26px]">Dashboard</span>
      </div>
      <Sep className="ml-[5px]" />
      <div className={purple + " ml-[5px] w-[169px] text-[16.4px]"}>Cash Flow Analysis</div>
      <Sep className="ml-[5px]" />
      <div className={gray + " ml-[5px] w-[241px]"}>Future Cash Flow - Principal</div>
      <Sep className="ml-[5px]" />
      <div className={gray + " ml-[5px] w-[233px]"}>Future Cash Flow - Interest</div>
      <Sep className="ml-[5px]" />
      <div className="ml-[50px] w-[16px] text-[24px] leading-[24px] text-[#444] text-center shrink-0">+</div>
      <div className="ml-[978px] w-[3px] flex flex-col gap-[3px] shrink-0">
        <div className="h-[3px] bg-[#444]" />
        <div className="h-[3px] bg-[#444]" />
        <div className="h-[3px] bg-[#444]" />
      </div>
      <div className="ml-[15px] w-[170px] h-[30px] rounded-full bg-[#f7f7f7] flex items-center justify-center gap-[8px] shrink-0">
        <svg width="6" height="14" viewBox="0 0 6 14" fill="#555"><path d="M6 0v14L0 7z" /></svg>
        <div className="w-[127px] h-[11px] rounded-full bg-[#6e6e6e]" />
        <svg width="6" height="14" viewBox="0 0 6 14" fill="#555"><path d="M0 0v14l6-7z" /></svg>
      </div>
    </div>
  );
}

function StatusBar() {
  return (
    <div className="h-[27px] flex items-center shrink-0 bg-[#f3f3f3] border-t border-[#fafafa] text-[12px] text-[#444]">
      <div className="ml-[14px] w-[36px]">Ready</div>
      <C className="ml-[25px] w-[18px]">
        <svg width="18" height="20" viewBox="0 0 18 20" fill="none" stroke="#444" strokeWidth="1.2"><path d="M2 1h14v3H2zM2 4v13h4M5 7h4M5 10h2" /><circle cx="11" cy="14" r="4.5" /><circle cx="11" cy="14" r="1.5" /></svg>
      </C>
      <C className="ml-[21px] w-[20px]">
        <svg width="20" height="20" viewBox="0 0 20 20" fill="none" stroke="#444" strokeWidth="1.1"><circle cx="9" cy="3" r="2" /><path d="M1 4l8 3 8-3M9 7v4l-5 8M9 11l5 8M13 12l6 7M19 12l-6 7" /></svg>
      </C>
      <div className="ml-[3px] font-bold whitespace-nowrap w-[160px] text-[#333]">Accessibility: Investigate</div>
      <div className="ml-[1891px] w-[48px] h-[27px] bg-[#d9d9d9] flex items-center justify-center">
        <svg width="14" height="22" viewBox="0 0 14 22" fill="none" stroke="#444" strokeWidth="1.2"><path d="M1 1h12v20H1zM5 1v20M9 1v20M1 6h12M1 11h12M1 16h12" /></svg>
      </div>
      <C className="w-[50px]">
        <svg width="16" height="22" viewBox="0 0 16 22" fill="none" stroke="#444" strokeWidth="1.2"><path d="M1 1h14v20H1zM5 5h6v12H5zM7 9h2M7 12h2" /></svg>
      </C>
      <C className="w-[50px]">
        <svg width="16" height="22" viewBox="0 0 16 22" fill="none" stroke="#444" strokeWidth="1.2"><path d="M1 1h14v20H1zM8 1v13H1M1 18h14" /></svg>
      </C>
      <div className="ml-[12px] w-[8px] h-px bg-[#444]" />
      <div className="ml-[4px] w-[123px] h-px bg-[#555] flex items-center pl-[61px]">
        <div className="w-[4px] h-[20px] bg-[#555]" />
      </div>
      <div className="ml-[6px] w-[10px] text-center text-[14px]">+</div>
      <div className="ml-[14px] w-[30px] whitespace-nowrap text-[11.5px]">100%</div>
    </div>
  );
}

const WinLogo = () => (
  <svg width="21" height="21" viewBox="0 0 21 21" fill="#111"><path d="M0 3l9-1.5V10H0zM10 1.3 21 0v10H10zM0 11h9v8.5L0 18zM10 11h11v10l-11-1.5z" /></svg>
);

const Violin = () => (
  <svg width="92" height="46" viewBox="0 0 92 46">
    <circle cx="24" cy="24" r="15" fill="#3c8f7e" />
    <path d="M12 18c7 2 18 8 23 15M16 13c7 4 15 10 20 17M10 26c5 1 10 5 13 11" stroke="#6db8a8" strokeWidth="1" fill="none" />
    <path d="M12 6l16 25M20 6l26 26" stroke="#e2a25c" strokeWidth="1.8" />
    <path d="M9 34c4 6 14 7 24 5" stroke="#5aa996" strokeWidth="1" fill="none" />
    <g transform="rotate(40 57 29)">
      <ellipse cx="57" cy="20" rx="8" ry="8" fill="#a86531" />
      <ellipse cx="57" cy="35" rx="10" ry="10" fill="#96551f" />
      <rect x="52" y="22" width="10" height="8" fill="#a86531" />
      <rect x="55.8" y="-6" width="2.4" height="20" fill="#3d2814" />
      <circle cx="57" cy="-7" r="1.8" fill="#3d2814" />
    </g>
    <path d="M60 45 88 5" stroke="#6b4a36" strokeWidth="1.6" />
  </svg>
);

function Slot({ children, bar }: { children: React.ReactNode; bar?: boolean }) {
  return (
    <div className={"w-[50px] h-[50px] mr-[12px] flex items-center justify-center shrink-0 border-b-[3px] " + (bar ? "border-[#0078d4]" : "border-transparent")}>{children}</div>
  );
}

function Taskbar() {
  return (
    <div className="h-[50px] flex items-center shrink-0 bg-[#d0dfea] text-[#222]">
      <C className="ml-[19px] w-[21px]"><WinLogo /></C>
      <div className="ml-[20px] w-[360px] h-[48px] bg-white border border-[#cfcfcf] flex items-center pl-[15px] shrink-0">
        <svg width="20" height="22" viewBox="0 0 20 22" fill="none" stroke="#222" strokeWidth="1.3"><circle cx="12" cy="8" r="6.5" /><path d="M8 14 1.5 21" /></svg>
        <span className="ml-[14px] text-[17px] w-[166px] whitespace-nowrap">Type here to search</span>
        <div className="ml-[44px]"><Violin /></div>
      </div>
      <C className="ml-[17px] w-[22px]">
        <svg width="20" height="20" viewBox="0 0 20 20" fill="none" stroke="#111" strokeWidth="1.3"><path d="M1 1h12M1 19h12M1 5h12v10H1zM18 1v6M18 13v6M16.5 9h3v2h-3z" /></svg>
      </C>
      <div className="ml-[30px] flex">
        <Slot>
          <svg width="28" height="24" viewBox="0 0 28 24"><path d="M0 2h11l3 3h14v19H0z" fill="#ffd76a" /><path d="M0 2h11l3 3H0z" fill="#e1a300" /><path d="M5 24V13h18v11h-6v-5h-6v5z" fill="#2f8fdc" /></svg>
        </Slot>
        <Slot>
          <svg width="30" height="30" viewBox="0 0 30 30" fill="none"><ellipse cx="13" cy="12" rx="12" ry="9" stroke="#e66" strokeWidth="1.3" fill="#fff" transform="rotate(-25 13 12)" /><path d="M8 5l10 14M18 4l-3 16" stroke="#888" strokeWidth="1.3" /><circle cx="13" cy="25" r="3.5" stroke="#2f86d1" strokeWidth="1.8" /><circle cx="22" cy="20" r="3.5" stroke="#2f86d1" strokeWidth="1.8" /></svg>
        </Slot>
        <Slot bar>
          <svg width="30" height="30" viewBox="0 0 30 30"><circle cx="15" cy="15" r="14" fill="#e0162b" /><ellipse cx="15" cy="15" rx="6" ry="10.5" fill="#d0dfea" /></svg>
        </Slot>
        <Slot bar>
          <svg width="32" height="32" viewBox="0 0 32 32"><circle cx="15" cy="15" r="14" fill="#e74335" /><path d="M15 15 3 22a14 14 0 0 0 16 7z" fill="#34a853" /><path d="M15 1a14 14 0 0 1 13 9H15z" fill="#fbbc05" /><circle cx="15" cy="15" r="6" fill="#4a8bf5" stroke="#fff" strokeWidth="2" /><circle cx="22" cy="22" r="9" fill="#bdbdbd" stroke="#999" /><path d="M14 22h16" stroke="#fff" strokeWidth="1.5" /></svg>
        </Slot>
        <Slot bar>
          <div className="w-[26px] h-[26px] rounded-full bg-[#14a800] flex items-center justify-center text-white text-[13px] font-bold font-['Liberation_Sans'] tracking-tighter">up</div>
        </Slot>
        <Slot bar>
          <svg width="30" height="30" viewBox="0 0 30 30"><circle cx="16" cy="15" r="13" fill="#ff8f6b" /><path d="M16 2a13 13 0 0 0 0 26z" fill="#ed6c47" /><rect x="1" y="8" width="15" height="14" rx="1" fill="#c43e1c" /><text x="8.5" y="19" textAnchor="middle" fontSize="11" fontWeight="700" fill="#fff" fontFamily="Liberation Sans">P</text></svg>
        </Slot>
        <Slot bar>
          <svg width="26" height="28" viewBox="0 0 26 28"><path d="M4 4 20 0l5 22-16 5z" fill="#bfe0f5" stroke="#7fa9c4" /><path d="M4 4l6-1 5 23-6 1z" fill="#9fcdea" /><path d="M6 3l14-3" stroke="#777" strokeWidth="1.5" strokeDasharray="1 1.5" /></svg>
        </Slot>
        <Slot bar>
          <ExcelLogo s={26} />
        </Slot>
      </div>
      <C className="ml-[1099px] w-[16px]">
        <svg width="16" height="30" viewBox="0 0 16 30" fill="none"><path d="M9 2h2v18h-2z" fill="#b8d4ea" /><circle cx="10" cy="23" r="4" fill="#1f7ad1" /><path d="M10 10v12" stroke="#1f7ad1" strokeWidth="2" /><path d="M2 6l3 3M6 4v5M1 11h4" stroke="#7aa6c9" strokeWidth="1" /></svg>
      </C>
      <div className="ml-[16px] w-[108px] whitespace-nowrap text-[17px]">Cold weather</div>
      <C className="ml-[43px] w-[16px]"><svg width="14" height="10" viewBox="0 0 14 10" fill="none" stroke="#222" strokeWidth="1.1"><path d="M1 9l6-8 6 8" /></svg></C>
      <C className="ml-[14px] w-[16px]"><svg width="14" height="22" viewBox="0 0 14 22" fill="none" stroke="#333" strokeWidth="1"><rect x="2" y="1" width="10" height="20" rx="2" /><path d="M2 7h10M2 15h10" /><circle cx="7" cy="11" r="2" /></svg></C>
      <C className="ml-[13px] w-[16px]"><svg width="18" height="20" viewBox="0 0 18 20" fill="none" stroke="#333" strokeWidth="1"><path d="M1 7h3l4-4v14l-4-4H1zM11 6c2 2 2 6 0 8M14 4c3 3 3 9 0 12" /></svg></C>
      <C className="ml-[14px] w-[18px]"><svg width="18" height="24" viewBox="0 0 18 24"><circle cx="7" cy="10" r="6" fill="none" stroke="#666" strokeWidth="2" /><circle cx="11" cy="16" r="7" fill="#1f7ad1" /><rect x="10" y="14" width="2" height="6" fill="#fff" /><rect x="10" y="11.5" width="2" height="2" fill="#fff" /></svg></C>
      <C className="ml-[11px] w-[20px]"><svg width="20" height="24" viewBox="0 0 20 24" fill="none" stroke="#333" strokeWidth="1"><path d="M3 3h14v12H3zM10 15v7M5 22h10M1 8h2" /></svg></C>
      <div className="ml-[9px] w-[78px] text-[14.5px] leading-[23px] text-center text-[#222]">
        <div>5:38 PM</div>
        <div>1/24/2024</div>
      </div>
      <C className="ml-[16px] w-[24px]"><svg width="22" height="24" viewBox="0 0 22 24" fill="none" stroke="#222" strokeWidth="1.2"><path d="M2 2h18v16h-7l-2 3-2-3H2z" /></svg></C>
    </div>
  );
}

export default function App() {
  return (
    <div className="w-[2560px] h-[1440px] overflow-hidden flex flex-col bg-[#efefef] text-[#262626] font-['Noto_Sans',sans-serif]">
      <TitleBar />
      <TabRow />
      <Ribbon />
      <FormulaBar />
      <ColHeader />
      <Sheet />
      <SheetTabs />
      <StatusBar />
      <Taskbar />
    </div>
  );
}
